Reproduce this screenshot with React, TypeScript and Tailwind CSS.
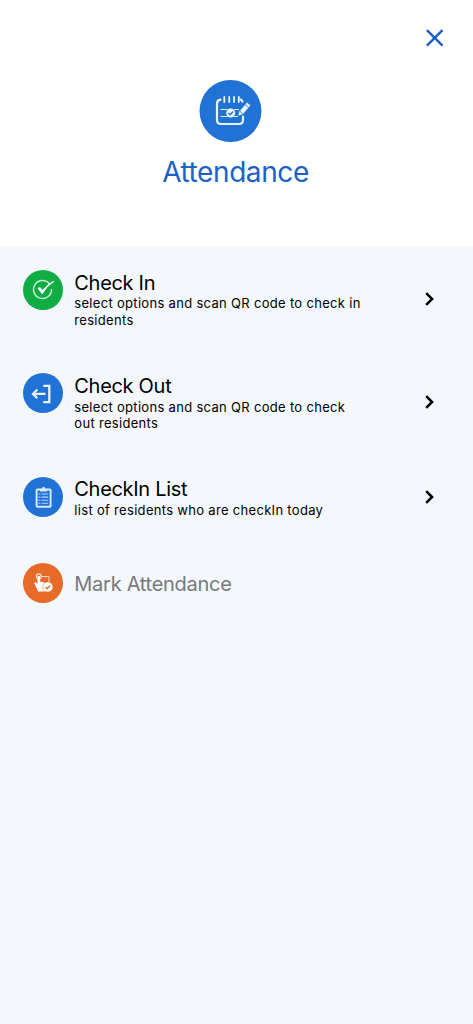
import React from 'react';

function AttendanceIcon() {
  return (
    <svg className="size-[62px] shrink-0 overflow-visible" viewBox="0 0 62 62" fill="none">
      <circle cx="30.500" cy="31" r="31" fill="#2073d5" />
      <g stroke="#e8f1fc" strokeWidth="2.200" strokeLinecap="round" strokeLinejoin="round">
        <path d="M20.500 19.600c-2.500.3-3.500 1.600-3.500 4V40q0 4 4 4h18q4 0 4-4v-3.500" />
        <path d="M40.500 19.600q1.600.4 2 2" />
        <path d="M24.300 17v5M29.200 17v5M34 17v5M38.800 17v5" strokeWidth="1.800" />
        <path d="M21 29.500h6M21 36.500h6M34.500 29.500h4M34.500 36.500h3" strokeWidth="1" />
      </g>
      <circle cx="30.700" cy="33" r="4.500" fill="#f0f6fd" />
      <path d="m28.300 33 1.800 1.800 3-3.300" stroke="#2073d5" strokeWidth="1.400" />
      <path d="m37.800 36 1.300-4.500 7.800-9.300 3.800 3.100-7.800 9.100Z" fill="#f0f6fd" stroke="#2073d5" strokeWidth=".6" />
      <path d="m45 24.500 3.300 2.800M40 31.200l2.700 2.400" stroke="#2073d5" strokeWidth=".8" />
    </svg>
  );
}

function CheckInIcon() {
  return (
    <svg className="size-10 shrink-0" viewBox="0 0 40 40" fill="none">
      <circle cx="20" cy="20" r="20" fill="#0fad43" />
      <path d="M26.800 14.200A9 9 0 1 0 28.500 19" stroke="#c9eed6" strokeWidth="1.500" />
      <path d="m15.300 18.300 3.900 5.200q4-7 11.300-11.900-6.300 3.600-11.200 9.300l-2.300-3.200Z" fill="#fff" stroke="#fff" strokeWidth="1.100" strokeLinejoin="round" />
    </svg>
  );
}

function CheckOutIcon() {
  return (
    <svg className="size-10 shrink-0" viewBox="0 0 40 40" fill="none">
      <circle cx="20" cy="20" r="20" fill="#2073d5" />
      <path d="M20.300 12.900h6v16.200h-6M22.500 20.900H10M14.300 16.500 10 20.900l4.300 4.400" stroke="#e8f1fc" strokeWidth="2.300" />
    </svg>
  );
}

function ListIcon() {
  return (
    <svg className="size-10 shrink-0" viewBox="0 0 40 40" fill="none">
      <circle cx="20" cy="20" r="20" fill="#2073d5" />
      <rect x="13.600" y="12.500" width="14" height="17.200" rx=".8" stroke="#d9e9fb" strokeWidth="1.900" />
      <path d="M17 14.500v-2.800h2q0-2 1.600-2t1.600 2h2v2.800Z" fill="#d9e9fb" />
      <path d="M15.500 17h1.900M18.500 17h6.700M15.500 20.100h1.900M18.500 20.100h6.700M15.500 23.200h1.900M18.500 23.200h6.700M15.500 26.300h1.900M18.500 26.300h6.700" stroke="#b9d6f5" strokeWidth="1.100" />
    </svg>
  );
}

function MarkIcon() {
  return (
    <svg className="size-10 shrink-0" viewBox="0 0 40 40" fill="none">
      <circle cx="20" cy="20" r="20" fill="#e66a28" />
      <path d="M18 13.500h8v8" stroke="#f9dacb" strokeWidth="1" />
      <circle cx="15.800" cy="13.300" r="2.500" stroke="#fbe4d9" strokeWidth="1.200" />
      <path d="M14.500 13.500q1.300-1.500 2.600 0v5l5.200 1.300q1.700.5 1.500 2.200L23 28.500h-7.800l-4-8.200q.7-1.700 2.100-.5l1.200 1.200Z" fill="#fff" />
      <circle cx="24.800" cy="24" r="5.100" fill="#fff" stroke="#e66a28" strokeWidth=".5" />
      <path d="m22.500 24 1.700 1.700 3-3.200" stroke="#e66a28" strokeWidth="1.300" />
    </svg>
  );
}

function Chevron() {
  return (
    <svg className="h-[14px] w-[9px] shrink-0" viewBox="0 0 9 14" fill="none" stroke="#000" strokeWidth="2.500">
      <path d="m1.200 1.100 5.900 5.900-5.900 5.900" />
    </svg>
  );
}

type Item = { title: string; lines: string[]; icon: React.ReactNode; disabled?: boolean };

const items: Item[] = [
  { title: 'Check In', lines: ['select options and scan QR code to check in', 'residents'], icon: <CheckInIcon /> },
  { title: 'Check Out', lines: ['select options and scan QR code to check', 'out residents'], icon: <CheckOutIcon /> },
  { title: 'CheckIn List', lines: ['list of residents who are checkIn today'], icon: <ListIcon /> },
  { title: 'Mark Attendance', lines: [], icon: <MarkIcon />, disabled: true },
];

export default function App() {
  return (
    <div className="flex h-[1024px] w-[473px] flex-col overflow-hidden bg-[#f4f7fc] font-['Inter',sans-serif] text-black">
      <header className="flex h-[246px] shrink-0 flex-col bg-white">
        <div className="flex h-20 justify-end pt-[29px] pr-[29px]">
          <button aria-label="Close" className="size-[18px]">
            <svg className="size-[18px]" viewBox="0 0 18 18" stroke="#1a5fc8" strokeWidth="2.400">
              <path d="m.9 1.100 15.600 15.600M16.500 1.100.9 16.700" />
            </svg>
          </button>
        </div>
        <div className="flex justify-center pr-[12px]">
          <AttendanceIcon />
        </div>
        <h1 className="mt-[13px] pr-[2px] text-center text-[28px] leading-[34px] tracking-[-0.4px] text-[#1d61c4]">Attendance</h1>
      </header>
      <main className="flex flex-col gap-[46.200px] pt-[24.200px] pr-[39px] pl-[22.500px]">
        {items.map((item) => (
          <div key={item.title} className="flex">
            {item.icon}
            <div className={item.disabled ? 'ml-[11.800px] flex h-10 items-center pt-[2px]' : 'ml-[11.800px] pt-[0.800px] -mb-[1.200px]'}>
              <h2 className={item.disabled ? 'text-xl leading-6 tracking-[-0.270px] text-[#77797c]' : 'mb-[0.400px] text-xl leading-6 tracking-[-0.300px]'}>{item.title}</h2>
              {item.lines.map((line) => (
                <p key={line} className="text-[13px] leading-[16.500px] tracking-[0.310px] whitespace-nowrap">{line}</p>
              ))}
            </div>
            {!item.disabled && (
              <div className="ml-auto flex items-center">
                <Chevron />
              </div>
            )}
          </div>
        ))}
      </main>
    </div>
  );
}
